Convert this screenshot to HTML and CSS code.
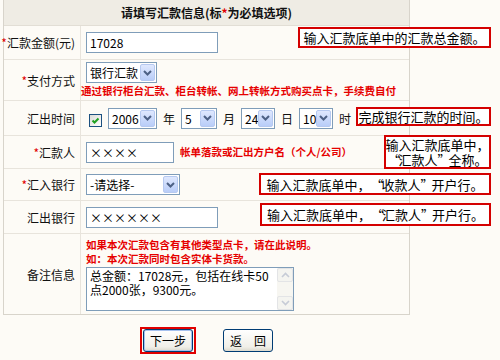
FILE: index.html
```html
<!DOCTYPE html>
<html lang="zh-CN">
<head>
    <meta charset="UTF-8">
    <title>填写汇款信息</title>
    <link rel="stylesheet" href="styles.css">
</head>
<body>
<div class="page">
    <div class="sheet">
        <div class="head">请填写汇款信息(标<span class="req">*</span>为必填选项)</div>

        <div class="row r1">
            <div class="label"><span class="req">*</span>汇款金额(元)</div>
            <div class="field"><input class="text wide" type="text" value="17028"></div>
        </div>

        <div class="row r2">
            <div class="label"><span class="req">*</span>支付方式</div>
            <div class="field stack">
                <span class="select w-pay"><select><option>银行汇款</option></select><span class="drop"><svg width="9" height="6" viewBox="0 0 9 6"><path d="M1 1 L4.5 4.5 L8 1" fill="none" stroke="#4d6185" stroke-width="2"/></svg></span></span>
                <div class="note pull">通过银行柜台汇款、柜台转帐、网上转帐方式购买点卡，手续费自付</div>
            </div>
        </div>

        <div class="row r3">
            <div class="label">汇出时间</div>
            <div class="field gap">
                <span class="check"><svg width="11" height="11" viewBox="0 0 11 11"><path d="M2.5 5.5 L4.5 7.5 L8.5 3.5" fill="none" stroke="#21a121" stroke-width="2"/></svg></span>
                <span class="select w-year"><select><option>2006</option></select><span class="drop"><svg width="9" height="6" viewBox="0 0 9 6"><path d="M1 1 L4.5 4.5 L8 1" fill="none" stroke="#4d6185" stroke-width="2"/></svg></span></span>
                <span>年</span>
                <span class="select w-month"><select><option>5</option></select><span class="drop"><svg width="9" height="6" viewBox="0 0 9 6"><path d="M1 1 L4.5 4.5 L8 1" fill="none" stroke="#4d6185" stroke-width="2"/></svg></span></span>
                <span>月</span>
                <span class="select w-day"><select><option>24</option></select><span class="drop"><svg width="9" height="6" viewBox="0 0 9 6"><path d="M1 1 L4.5 4.5 L8 1" fill="none" stroke="#4d6185" stroke-width="2"/></svg></span></span>
                <span>日</span>
                <span class="select w-day"><select><option>10</option></select><span class="drop"><svg width="9" height="6" viewBox="0 0 9 6"><path d="M1 1 L4.5 4.5 L8 1" fill="none" stroke="#4d6185" stroke-width="2"/></svg></span></span>
                <span>时</span>
            </div>
        </div>

        <div class="row r4">
            <div class="label"><span class="req">*</span>汇款人</div>
            <div class="field gap">
                <input class="text short" type="text" value="××××">
                <span class="note">帐单落款或汇出方户名（个人/公司）</span>
            </div>
        </div>

        <div class="row r5">
            <div class="label"><span class="req">*</span>汇入银行</div>
            <div class="field">
                <span class="select w-bank"><select><option>-请选择-</option></select><span class="drop"><svg width="9" height="6" viewBox="0 0 9 6"><path d="M1 1 L4.5 4.5 L8 1" fill="none" stroke="#4d6185" stroke-width="2"/></svg></span></span>
            </div>
        </div>

        <div class="row r6">
            <div class="label">汇出银行</div>
            <div class="field"><input class="text wide" type="text" value="××××××"></div>
        </div>

        <div class="row r7">
            <div class="label">备注信息</div>
            <div class="field stack">
                <div class="note">如果本次汇款包含有其他类型点卡，请在此说明。</div>
                <div class="note">如：本次汇款同时包含实体卡货款。</div>
                <div class="memo">
                    <textarea wrap="off">总金额：17028元，包括在线卡50
点2000张，9300元。</textarea>
                    <div class="vscroll">
                        <span class="arrow"><svg width="9" height="6" viewBox="0 0 9 6"><path d="M1 5 L4.5 1.5 L8 5" fill="none" stroke="#c6cbd6" stroke-width="1.6"/></svg></span>
                        <span class="arrow"><svg width="9" height="6" viewBox="0 0 9 6"><path d="M1 1 L4.5 4.5 L8 1" fill="none" stroke="#c6cbd6" stroke-width="1.6"/></svg></span>
                    </div>
                </div>
            </div>
        </div>
    </div>

    <div class="actions">
        <span class="ring"><button class="btn default">下一步</button></span>
        <button class="btn">返　回</button>
    </div>

    <!-- red callouts laid over the form -->
    <div class="tip tip-amount"><p>输入汇款底单中的汇款总金额。</p></div>
    <div class="tip tip-time"><p>完成银行汇款的时间。</p></div>
    <div class="tip tip-payer"><p>输入汇款底单中，</p><p><span class="qo">“</span>汇款人<span class="qc">”</span>全称。</p></div>
    <div class="tip tip-in"><p>输入汇款底单中，<span class="qo">“</span>收款人<span class="qc">”</span>开户行。</p></div>
    <div class="tip tip-out"><p>输入汇款底单中，<span class="qo">“</span>汇款人<span class="qc">”</span>开户行。</p></div>
</div>
</body>
</html>
```

FILE: styles.css
```css
body {
    margin: 0;
    background-color: #fdfbf6;
    font-family: "Noto Sans CJK SC", "Liberation Sans", sans-serif;
    font-size: 12px;
    color: #111;
}

.page {
    position: relative;
    width: 500px;
    height: 360px;
}

.sheet {
    margin-left: 3px;
    width: 407px;
    box-sizing: border-box;
    border: 1px solid #d8d4cb;
    border-top: 0;
}

.head {
    height: 26px;
    box-sizing: border-box;
    border-bottom: 1px solid #e2ded5;
    background-color: #efece4;
    display: flex;
    align-items: center;
    justify-content: center;
    font-weight: bold;
}

.req {
    color: #e00000;
}

.row {
    display: flex;
    box-sizing: border-box;
    border-bottom: 1px solid #e8e4dc;
}

.row:last-child {
    border-bottom: 0;
}

.r1 { height: 34px; }
.r2 { height: 41px; }
.r3 { height: 35px; }
.r4 { height: 33px; }
.r5 { height: 32px; }
.r6 { height: 33px; }
.r7 { height: 80px; }

.label {
    width: 77px;
    flex: none;
    box-sizing: border-box;
    border-right: 1px solid #e8e4dc;
    padding-right: 5px;
    display: flex;
    align-items: center;
    justify-content: flex-end;
    white-space: nowrap;
}

.field {
    flex: 1;
    display: flex;
    align-items: center;
    padding-left: 5px;
    white-space: nowrap;
}

.field.gap {
    gap: 6px;
}

.field.stack {
    flex-direction: column;
    align-items: flex-start;
    justify-content: center;
}

.note {
    color: #e60000;
    font-size: 10.5px;
    font-weight: bold;
    line-height: 14px;
}

.note.pull {
    margin-left: -5px;
    margin-top: 1px;
}

/* inputs, xp look */
.text {
    height: 21px;
    box-sizing: border-box;
    border: 1px solid #7f9db9;
    background: #fff;
    padding: 0 3px;
    font-family: inherit;
    font-size: 12px;
    color: #000;
    outline: none;
}

.text.wide { width: 132px; }
.text.short { width: 88px; }

.select {
    display: inline-flex;
    height: 21px;
    box-sizing: border-box;
    border: 1px solid #7f9db9;
    background: #fff;
    padding: 1px;
}

.select select {
    flex: 1;
    min-width: 0;
    appearance: none;
    -webkit-appearance: none;
    border: 0;
    background: transparent;
    padding: 0 0 0 2px;
    font-family: inherit;
    font-size: 12px;
    color: #000;
    outline: none;
}

.drop {
    width: 15px;
    flex: none;
    box-sizing: border-box;
    border: 1px solid #b6c9f0;
    border-radius: 2px;
    background: linear-gradient(#dfe8fe, #b9cdf8);
    display: flex;
    align-items: center;
    justify-content: center;
}

.w-pay { width: 71px; }
.w-year { width: 49px; }
.w-month { width: 36px; }
.w-day { width: 34px; }
.w-bank { width: 94px; }

.check {
    width: 13px;
    height: 13px;
    box-sizing: border-box;
    border: 1px solid #1c5180;
    background: linear-gradient(135deg, #dcdcd7, #fff);
    margin-left: 3px;
    margin-top: 5px;
    display: flex;
    align-items: center;
    justify-content: center;
}

/* memo box with disabled scrollbar */
.memo {
    display: flex;
    width: 208px;
    height: 44px;
    box-sizing: border-box;
    border: 1px solid #7f9db9;
    background: #fff;
    margin-top: 1px;
}

.memo textarea {
    flex: 1;
    border: 0;
    resize: none;
    overflow: hidden;
    padding: 1px 3px;
    font-family: inherit;
    font-size: 12px;
    line-height: 14px;
    color: #000;
    outline: none;
}

.vscroll {
    width: 16px;
    flex: none;
    background: #f7f6f1;
    display: flex;
    flex-direction: column;
    justify-content: space-between;
}

.arrow {
    height: 14px;
    box-sizing: border-box;
    border: 1px solid #e3e4e6;
    border-radius: 2px;
    background: #f4f4f0;
    display: flex;
    align-items: center;
    justify-content: center;
}

/* buttons */
.actions {
    margin-left: 3px;
    margin-top: 12px;
    width: 407px;
    display: flex;
    justify-content: center;
    align-items: center;
    gap: 27px;
}

.ring {
    display: flex;
    border: 2px solid #e00000;
    padding: 0 1px;
}

.btn {
    width: 50px;
    height: 23px;
    border: 1px solid #003c74;
    border-radius: 3px;
    background: linear-gradient(#ffffff, #f0efe8 80%, #dcd9cd);
    font-family: inherit;
    font-size: 12px;
    color: #000;
    padding: 0;
}

.btn.default {
    box-shadow: inset 0 0 0 1px #a6c1ef;
}

/* callouts */
.tip {
    position: absolute;
    right: 9px;
    box-sizing: border-box;
    border: 2px solid #d40000;
    background: #fff;
    color: #000;
    font-size: 13px;
    line-height: 15px;
    display: flex;
    flex-direction: column;
    align-items: center;
    justify-content: center;
    white-space: nowrap;
}

.tip p {
    margin: 0;
}

/* full-width quote cells */
.tip .qo,
.tip .qc {
    display: inline-block;
    width: 11px;
}

.tip .qo { text-align: right; }
.tip .qc { text-align: left; }

.tip-amount { top: 27px; width: 193px; height: 21px; }
.tip-time { top: 107px; width: 135px; height: 19px; }
.tip-payer { top: 135px; width: 107px; height: 34px; }
.tip-in { top: 173px; width: 232px; height: 22px; }
.tip-out { top: 203px; width: 231px; height: 23px; }
```
